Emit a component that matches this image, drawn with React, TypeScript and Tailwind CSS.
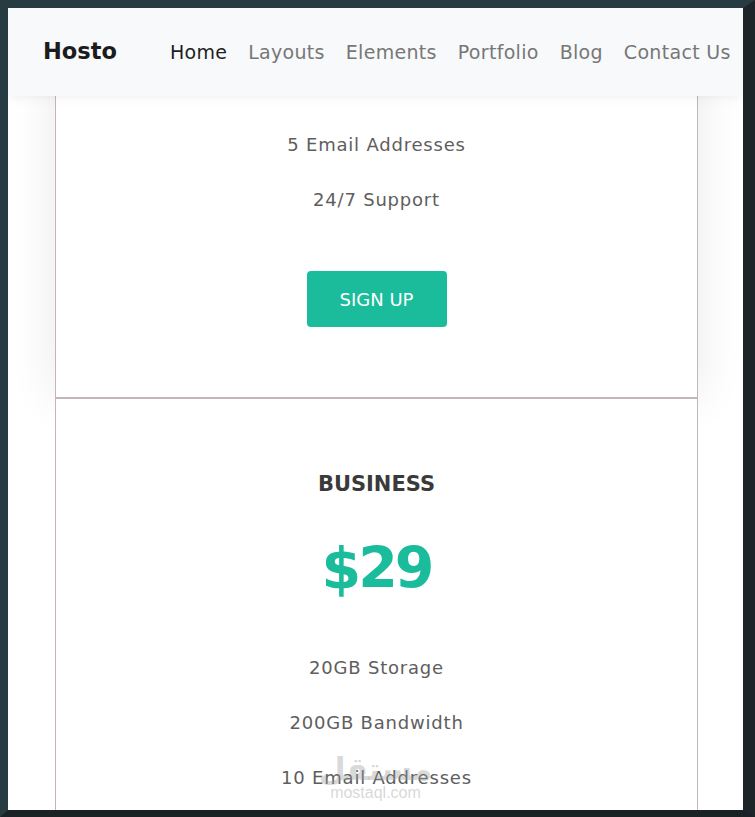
import React from "react";

const font = { fontFamily: '"DejaVu Sans", "Open Sans", Arial, sans-serif' };

type Plan = { name: string; price: string; features: string[] };

const plans: Plan[] = [
  { name: "BASIC", price: "$9", features: ["5GB Storage", "50GB Bandwidth", "5 Email Addresses", "24/7 Support"] },
  { name: "BUSINESS", price: "$29", features: ["20GB Storage", "200GB Bandwidth", "10 Email Addresses", "24/7 Support"] },
];

const links = ["Home", "Layouts", "Elements", "Portfolio", "Blog", "Contact Us"];

function PlanCard({ plan, lifted }: { plan: Plan; lifted?: boolean }) {
  return (
    <div
      className={`relative flex flex-col items-center border border-[#c4b6b6] bg-white pt-[70px] pb-[70px] ${
        lifted ? "shadow-[0_0_45px_rgba(0,0,0,0.09)]" : ""
      }`}
    >
      <h3 className="text-[21px] leading-[30px] font-bold text-[#3a3a3a]">{plan.name}</h3>
      <div className="mt-[37px] text-[57px] leading-[64px] font-bold text-[#1abc9c] tracking-[-3px]">{plan.price}</div>
      <ul className="mt-[40px] flex flex-col items-center">
        {plan.features.map((f) => (
          <li key={f} className="h-[55px] leading-[55px] text-[18px] tracking-[0.8px] text-[#5e5e5e]">
            {f}
          </li>
        ))}
      </ul>
      <button className="mt-[44px] w-[140px] h-[56px] rounded-[4px] bg-[#1abc9c] text-white text-[18px]">
        SIGN UP
      </button>
    </div>
  );
}

export default function App() {
  return (
    <div
      style={font}
      className="w-[755px] h-[817px] border-t-[8px] border-l-[8px] border-r-[12px] border-b-[7px] border-t-[#273c42] border-l-[#273c42] border-r-[#1d2528] border-b-[#1b2226] bg-white"
    >
      <div className="relative h-full overflow-hidden bg-white">
        {/* fixed navbar over the scrolled page */}
        <nav className="absolute inset-x-0 top-0 z-10 h-[88px] bg-[#f8f9fa] shadow-[0_2px_10px_rgba(0,0,0,0.06)] flex items-center pl-[35px]">
          <span className="text-[22.5px] font-bold text-[#1c1c1c]">Hosto</span>
          <ul className="ml-[53px] flex gap-[21px] text-[19px] tracking-[0.3px]">
            {links.map((l, i) => (
              <li key={l} className={i === 0 ? "text-[#1f1f1f]" : "text-[#777]"}>
                {l}
              </li>
            ))}
          </ul>
        </nav>

        <div className="ml-[47px] mr-[45px] mt-[-243px] flex flex-col">
          <PlanCard plan={plans[0]} lifted />
          <PlanCard plan={plans[1]} />
        </div>

        {/* watermark */}
        <div className="absolute bottom-[9px] left-1/2 -translate-x-1/2 flex flex-col items-center text-[#9a9a9a]/40 leading-none pointer-events-none">
          <span className="text-[31px] font-bold" style={{ fontFamily: '"Noto Sans", "DejaVu Sans", sans-serif' }}>
            مستقل
          </span>
          <span className="text-[16px] mt-[1px]" style={{ fontFamily: '"Liberation Sans", Arial, sans-serif' }}>
            mostaql.com
          </span>
        </div>
      </div>
    </div>
  );
}
